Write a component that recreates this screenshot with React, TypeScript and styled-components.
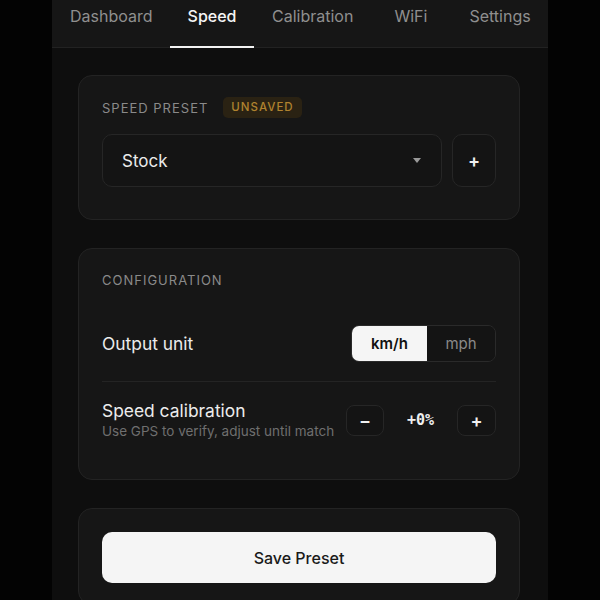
import { FunctionComponent } from "react";
import styled, { createGlobalStyle } from "styled-components";

const GlobalStyle = createGlobalStyle`
  html, body {
    margin: 0;
    padding: 0;
    background: #030303;
    overflow: hidden;
  }
  * {
    box-sizing: border-box;
  }
`;

const Page = styled.div`
  width: 600px;
  height: 600px;
  display: flex;
  justify-content: center;
  background: #030303;
  font-family: Inter, "Liberation Sans", sans-serif;
  color: #ececec;
  overflow: hidden;
`;

const Column = styled.div`
  width: 496px;
  background: #0e0e0e;
  display: flex;
  flex-direction: column;
`;

const TabBar = styled.nav`
  display: flex;
  flex-shrink: 0;
  background: #161616;
  border-bottom: 1px solid #222;
  height: 48px;
`;

const Tab = styled.div<{ $active?: boolean }>`
  padding: 5px 18px 0;
  min-width: 81px;
  text-align: center;
  font-size: 16px;
  line-height: 22px;
  color: ${(p) => (p.$active ? "#f5f5f5" : "#8f8f8f")};
  font-weight: ${(p) => (p.$active ? 500 : 400)};
  border-bottom: 2px solid ${(p) => (p.$active ? "#f2f2f2" : "transparent")};
  margin-bottom: -1px;
  white-space: nowrap;
`;

const Content = styled.div`
  display: flex;
  flex-direction: column;
  flex-shrink: 0;
  gap: 28px;
  padding: 27px 28px 27px 26px;
`;

const Card = styled.section`
  background: #161616;
  border: 1px solid #232323;
  border-radius: 14px;
  padding: 23px 23px 21px;
`;

const PresetCard = styled(Card)`
  padding: 21px 23px 32px;
`;

const HeaderRow = styled.div`
  display: flex;
  align-items: center;
  gap: 15px;
  margin-bottom: 16px;
`;

const SectionLabel = styled.div`
  font-size: 13px;
  line-height: 16px;
  letter-spacing: 1px;
  color: #8a8a8a;
  text-transform: uppercase;
`;

const Badge = styled.span`
  background: #2a2213;
  color: #b0832f;
  font-size: 11.5px;
  font-weight: 500;
  letter-spacing: 1px;
  line-height: 13px;
  padding: 4px 8px;
  border-radius: 5px;
`;

const PresetRow = styled.div`
  display: flex;
  gap: 10px;
`;

const Select = styled.div`
  flex: 1;
  height: 53px;
  display: flex;
  align-items: center;
  justify-content: space-between;
  padding: 0 20px 0 19px;
  border: 1px solid #262626;
  border-radius: 10px;
  background: #141414;
  font-size: 17px;
  color: #ebebeb;
`;

const Caret = styled.span`
  width: 0;
  height: 0;
  border-left: 4.5px solid transparent;
  border-right: 4.5px solid transparent;
  border-top: 5px solid #9a9a9a;
`;

const IconButton = styled.button<{ $w: number; $h: number }>`
  width: ${(p) => p.$w}px;
  height: ${(p) => p.$h}px;
  display: flex;
  align-items: center;
  justify-content: center;
  background: #141414;
  border: 1px solid #262626;
  border-radius: ${(p) => (p.$h > 40 ? 10 : 8)}px;
  color: #f0f0f0;
  font-family: Inter, "Liberation Sans", sans-serif;
  font-size: 18px;
  font-weight: 600;
  padding: 0;
`;

const ConfigTitle = styled(SectionLabel)`
  margin-bottom: 16px;
`;

const SettingRow = styled.div<{ $divider?: boolean }>`
  display: flex;
  align-items: center;
  justify-content: space-between;
  padding: ${(p) => (p.$divider ? "21px 0 19px" : "18px 0")};
  border-bottom: ${(p) => (p.$divider ? "1px solid #242424" : "none")};
`;

const SettingText = styled.div`
  display: flex;
  flex-direction: column;
`;

const SettingName = styled.div`
  font-size: 17.4px;
  line-height: 22px;
  color: #ececec;
`;

const SettingHint = styled.div`
  font-size: 13.5px;
  line-height: 18px;
  color: #6f6f6f;
`;

const Segmented = styled.div`
  display: flex;
  border: 1px solid #2a2a2a;
  border-radius: 8px;
  overflow: hidden;
  height: 37px;
`;

const Segment = styled.div<{ $active?: boolean }>`
  width: ${(p) => (p.$active ? 75 : 68)}px;
  display: flex;
  align-items: center;
  justify-content: center;
  font-size: 15px;
  font-weight: ${(p) => (p.$active ? 600 : 400)};
  background: ${(p) => (p.$active ? "#f5f5f5" : "#141414")};
  color: ${(p) => (p.$active ? "#111" : "#8a8a8a")};
`;

const Stepper = styled.div`
  display: flex;
  align-items: center;
`;

const StepValue = styled.div`
  width: 73px;
  text-align: center;
  font-family: "DejaVu Sans Mono", "Liberation Mono", monospace;
  font-size: 15px;
  font-weight: 700;
  color: #efefef;
`;

const PrimaryButton = styled.button`
  width: 100%;
  height: 51px;
  border: none;
  border-radius: 10px;
  background: #f5f5f5;
  color: #1a1a1a;
  font-family: Inter, "Liberation Sans", sans-serif;
  font-size: 16px;
  font-weight: 500;
`;

const tabs = ["Dashboard", "Speed", "Calibration", "WiFi", "Settings"];

const App: FunctionComponent = () => {
  return (
    <>
      <GlobalStyle />
      <Page>
        <Column>
          <TabBar>
            {tabs.map((t) => (
              <Tab key={t} $active={t === "Speed"}>
                {t}
              </Tab>
            ))}
          </TabBar>
          <Content>
            <PresetCard>
              <HeaderRow>
                <SectionLabel>Speed Preset</SectionLabel>
                <Badge>UNSAVED</Badge>
              </HeaderRow>
              <PresetRow>
                <Select>
                  <span>Stock</span>
                  <Caret />
                </Select>
                <IconButton $w={44} $h={53}>+</IconButton>
              </PresetRow>
            </PresetCard>

            <Card>
              <ConfigTitle>Configuration</ConfigTitle>
              <SettingRow $divider>
                <SettingName>Output unit</SettingName>
                <Segmented>
                  <Segment $active>km/h</Segment>
                  <Segment>mph</Segment>
                </Segmented>
              </SettingRow>
              <SettingRow>
                <SettingText>
                  <SettingName>Speed calibration</SettingName>
                  <SettingHint>Use GPS to verify, adjust until match</SettingHint>
                </SettingText>
                <Stepper>
                  <IconButton $w={38} $h={31}>−</IconButton>
                  <StepValue>+0%</StepValue>
                  <IconButton $w={39} $h={31}>+</IconButton>
                </Stepper>
              </SettingRow>
            </Card>

            <Card>
              <PrimaryButton>Save Preset</PrimaryButton>
            </Card>
          </Content>
        </Column>
      </Page>
    </>
  );
};

export default App;
